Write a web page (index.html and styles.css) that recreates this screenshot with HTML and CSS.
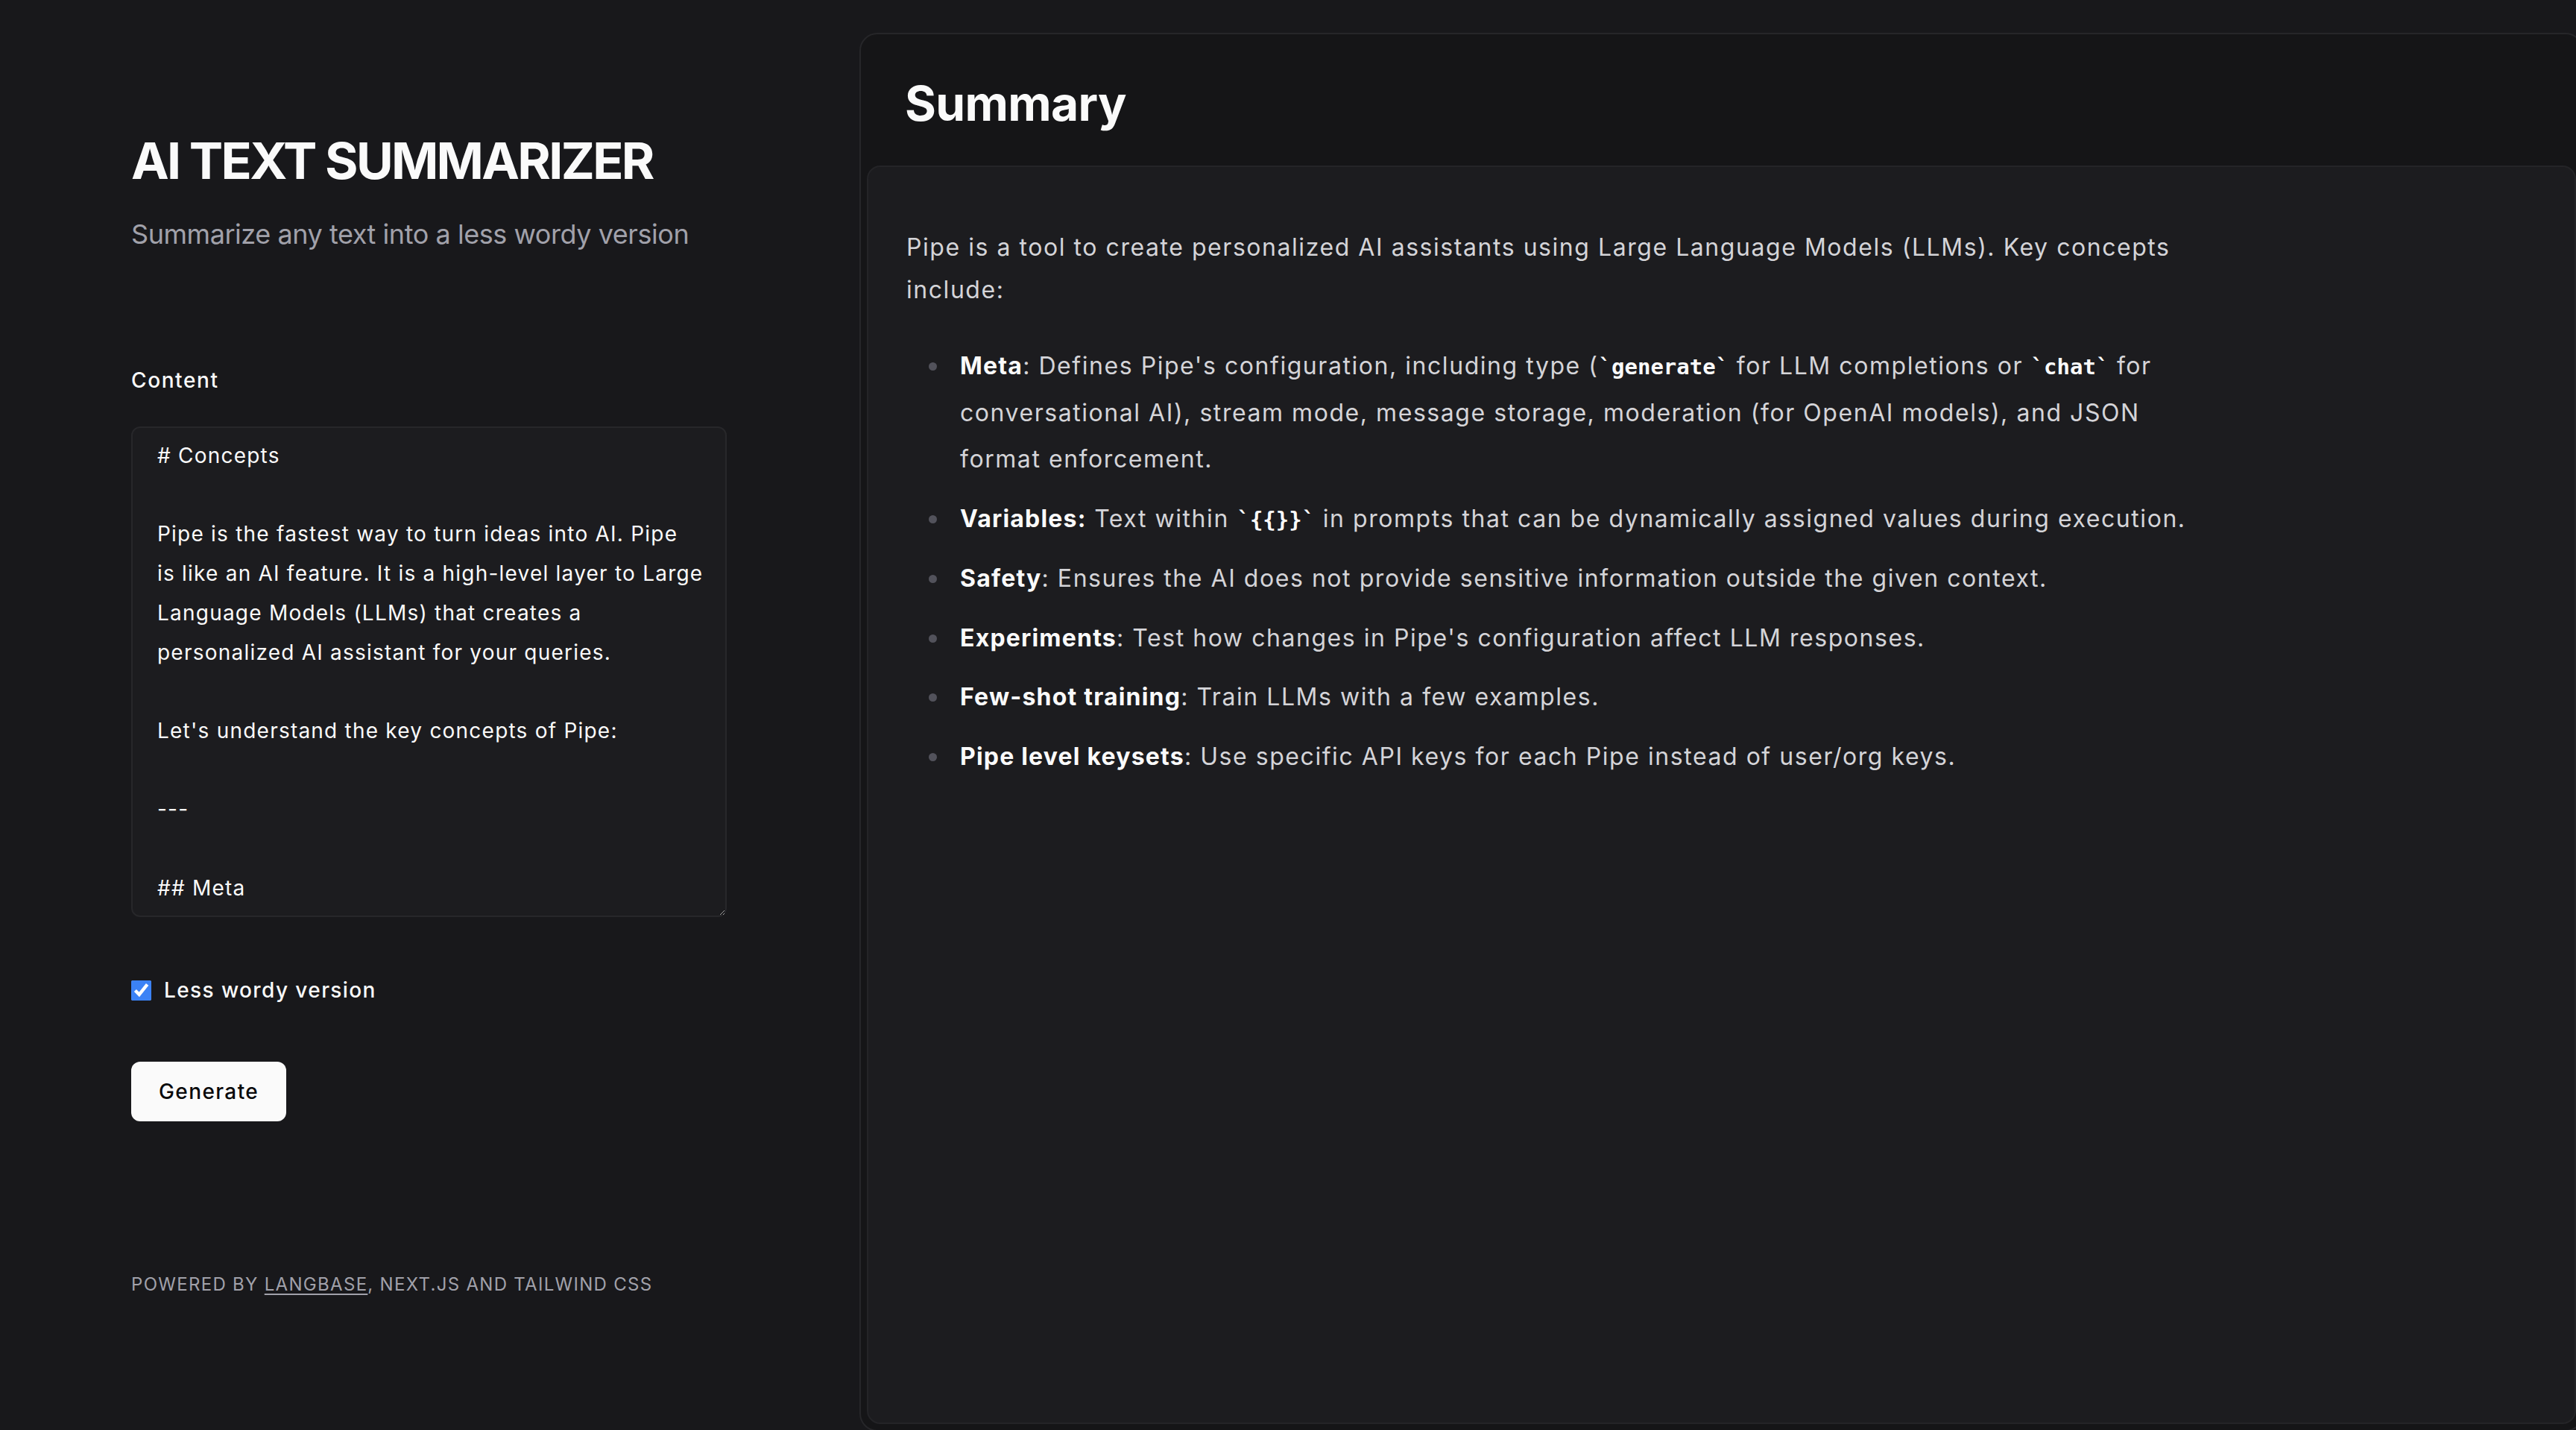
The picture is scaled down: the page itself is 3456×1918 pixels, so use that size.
FILE: index.html
```html
<!DOCTYPE html>
<html lang="en">
<head>
<meta charset="utf-8">
<title>AI Text Summarizer</title>
<link rel="stylesheet" href="styles.css">
</head>
<body>
<div class="layout">
  <aside class="sidebar">
    <h1 class="title">AI TEXT SUMMARIZER</h1>
    <p class="subtitle">Summarize any text into a less wordy version</p>

    <form class="form">
      <label class="field-label" for="content">Content</label>
      <textarea id="content" class="content-input" rows="12" wrap="off"># Concepts

Pipe is the fastest way to turn ideas into AI. Pipe
is like an AI feature. It is a high-level layer to Large
Language Models (LLMs) that creates a
personalized AI assistant for your queries.

Let's understand the key concepts of Pipe:

---

## Meta

Meta is the configuration of a Pipe. It defines
the type of the Pipe, stream mode, message
storage, moderation and JSON mode.</textarea>

      <label class="check-row">
        <input type="checkbox" class="check" checked>
        <span>Less wordy version</span>
      </label>

      <button type="button" class="btn">Generate</button>
    </form>

    <footer class="credits">POWERED BY <a href="#" class="credits-link">LANGBASE</a>, NEXT.JS AND TAILWIND CSS</footer>
  </aside>

  <main class="panel">
    <header class="panel-head">
      <h2 class="panel-title">Summary</h2>
    </header>
    <section class="result">
      <div class="prose">
        <p>Pipe is a tool to create personalized AI assistants using Large Language Models (LLMs). Key concepts include:</p>
        <ul>
          <li><strong>Meta</strong>: Defines Pipe's configuration, including type (<code>generate</code> for LLM completions or <code>chat</code> for conversational AI), stream mode, message storage, moderation (for OpenAI models), and JSON format enforcement.</li>
          <li><strong>Variables:</strong> Text within <code>{{}}</code> in prompts that can be dynamically assigned values during execution.</li>
          <li><strong>Safety</strong>: Ensures the AI does not provide sensitive information outside the given context.</li>
          <li><strong>Experiments</strong>: Test how changes in Pipe's configuration affect LLM responses.</li>
          <li><strong>Few-shot training</strong>: Train LLMs with a few examples.</li>
          <li><strong>Pipe level keysets</strong>: Use specific API keys for each Pipe instead of user/org keys.</li>
        </ul>
      </div>
    </section>
  </main>
</div>
</body>
</html>
```
FILE: styles.css
```css
html, body {
  margin: 0;
  padding: 0;
  overflow: hidden;
  background: #18181b;
}

body {
  font-family: Inter, "Liberation Sans", sans-serif;
  color: #fafafa;
  -webkit-font-smoothing: antialiased;
}

.layout {
  display: flex;
  height: 1918px;
  width: 3470px;
}

/* ---------- left column ---------- */
.sidebar {
  flex: 0 0 1153px;
  box-sizing: border-box;
  padding: 175px 178px 0 176px;
  display: flex;
  flex-direction: column;
}

.title {
  margin: 0;
  font-size: 68px;
  line-height: 80px;
  font-weight: 700;
  letter-spacing: -2.7px;
  color: #fafafa;
}

.subtitle {
  margin: 31px 0 0;
  font-size: 36px;
  line-height: 56px;
  letter-spacing: -0.45px;
  color: #a1a1aa;
}

.form {
  display: flex;
  flex-direction: column;
  align-items: flex-start;
  margin-top: 148px;
}

.field-label {
  font-size: 28px;
  line-height: 40px;
  font-weight: 500;
  letter-spacing: 1.6px;
  color: #fafafa;
}

.content-input {
  margin-top: 42px;
  box-sizing: border-box;
  width: 799px;
  height: 658px;
  padding: 11px 26px 11px 33px;
  border: 2px solid #27272a;
  border-radius: 12px;
  background: #1c1c1f;
  color: #fafafa;
  font-family: Inter, "Liberation Sans", sans-serif;
  font-size: 28px;
  line-height: 52.7px;
  letter-spacing: 1.22px;
  white-space: pre;
  overflow: hidden;
  outline: none;
  resize: vertical;
  color-scheme: dark;
  scrollbar-width: none;
}

.content-input::-webkit-scrollbar {
  display: none;
}

.check-row {
  margin-top: 78px;
  display: flex;
  align-items: center;
  gap: 17px;
  font-size: 28px;
  line-height: 40px;
  font-weight: 500;
  letter-spacing: 1.4px;
  color: #fafafa;
}

.check {
  width: 27px;
  height: 27px;
  margin: 0;
  accent-color: #3b82f6;
}

.btn {
  margin-top: 76px;
  height: 80px;
  padding: 0 37px;
  border: none;
  border-radius: 12px;
  background: #fafafa;
  color: #09090b;
  font-family: Inter, "Liberation Sans", sans-serif;
  font-size: 28px;
  font-weight: 500;
  letter-spacing: 1.4px;
}

.credits {
  margin-top: 203px;
  font-size: 24px;
  line-height: 32px;
  letter-spacing: 1.3px;
  color: #a1a1aa;
}

.credits-link {
  color: inherit;
  text-decoration: underline;
  text-underline-offset: 4px;
}

/* ---------- right column ---------- */
.panel {
  flex: 0 0 2313px;
  box-sizing: border-box;
  margin-top: 44px;
  height: 1876px;
  border: 2px solid #262629;
  border-radius: 24px;
  background: #151517;
  padding: 0 8px 8px;
  display: flex;
  flex-direction: column;
}

.panel-head {
  padding: 54px 51px 45px;
}

.panel-title {
  margin: 0;
  font-size: 64px;
  line-height: 77px;
  font-weight: 700;
  letter-spacing: -0.01em;
  color: #fafafa;
}

.result {
  flex: 1;
  border: 2px solid #242427;
  border-radius: 18px;
  background: #1c1c1f;
  padding: 39px 51px;
}

.prose {
  max-width: 1736px;
  font-size: 32px;
  letter-spacing: 1.55px;
  color: #d4d4d8;
}

.prose p {
  margin: 40px 0 0;
  line-height: 57px;
}

.prose ul {
  margin: 43px 0 0;
  padding: 0 0 0 72px;
  list-style: none;
}

.prose li {
  position: relative;
  margin-top: 17.5px;
  line-height: 62px;
}

.prose li:first-child {
  margin-top: 0;
}

.prose li::before {
  content: "";
  position: absolute;
  left: -42px;
  top: 26px;
  width: 11px;
  height: 11px;
  border-radius: 50%;
  background: #52525b;
}

.prose strong {
  color: #fafafa;
  font-weight: 700;
  letter-spacing: 1.2px;
}

.prose code {
  font-family: "DejaVu Sans Mono", "Liberation Mono", monospace;
  font-size: 29px;
  font-weight: 700;
  letter-spacing: 0;
  color: #fafafa;
}

.prose code::before,
.prose code::after {
  content: "`";
}
```
